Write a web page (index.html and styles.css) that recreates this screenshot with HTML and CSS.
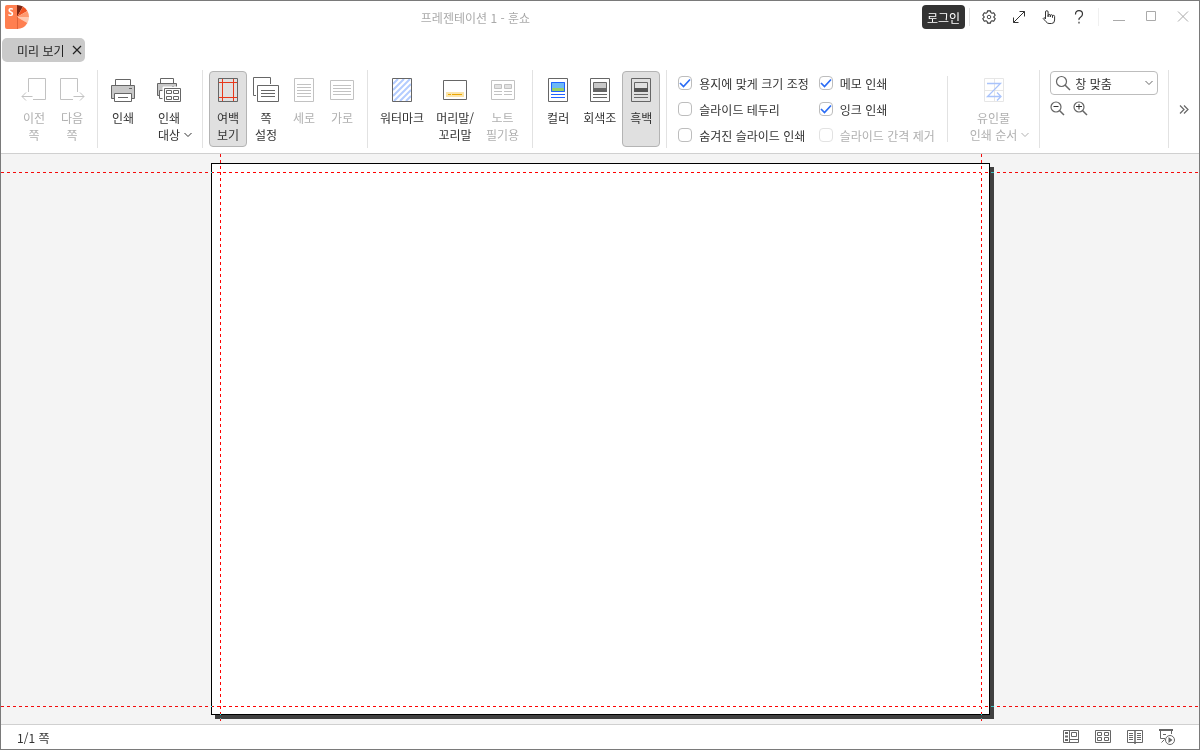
FILE: index.html
```html
<!DOCTYPE html>
<html lang="ko">

<head>
    <meta charset="UTF-8">
    <meta name="viewport" content="width=device-width, initial-scale=1.0">
    <title>프레젠테이션 1 - 훈쇼</title>
    <link rel="stylesheet" href="styles.css">
</head>

<body>
    <header class="titlebar">
        <svg class="logo" width="24" height="24" viewBox="0 0 24 24">
            <path d="M2 0h10v24H2a2 2 0 0 1-2-2V2a2 2 0 0 1 2-2z" fill="#ff7f50" />
            <path d="M12 12V0a12 12 0 0 1 6 1.600z" fill="#7c2512" />
            <path d="M12 12L18 1.600A12 12 0 0 1 22.400 6z" fill="#f05423" />
            <path d="M12 12L22.400 6A12 12 0 0 1 24 12z" fill="#ff9a70" />
            <path d="M12 12H24A12 12 0 0 1 22.400 18z" fill="#ffc9b0" />
            <path d="M12 12L22.400 18A12 12 0 0 1 12 24z" fill="#ff7f50" />
            <path d="M12.500 12v12" stroke="#e0643a" />
            <text x="3" y="11" class="logo-letter">S</text>
        </svg>
        <h1 class="doc-title">프레젠테이션 1 - 훈쇼</h1>
        <button class="login">로그인</button>
        <span class="bar-sep"></span>
        <button class="bar-btn" aria-label="설정">
            <svg class="ico" width="14" height="14" viewBox="0 0 16 16">
                <path stroke-width="1.200" stroke-linejoin="round" d="M6.300 1h3.400l.5 2 1.200.7 2-.6 1.700 2.900-1.500 1.500v1l1.500 1.400-1.700 2.900-2-.5-1.200.7-.5 2H6.300l-.5-2-1.200-.7-2 .5L.9 9.900 2.400 8.500v-1L.9 6l1.700-2.900 2 .6L5.800 3z" />
                <circle cx="8" cy="8" r="2" />
            </svg>
        </button>
        <button class="bar-btn" aria-label="전체 화면">
            <svg class="ico" width="16" height="16" viewBox="0 0 16 16">
                <path d="M2.500 13.500l11-11M8.500 2.500h5v5M2.500 8.500v5h5" />
            </svg>
        </button>
        <button class="bar-btn" aria-label="터치 모드">
            <svg class="ico" width="16" height="16" viewBox="0 0 16 16">
                <path stroke-linejoin="round" d="M4.500 10V3a1.300 1.300 0 0 1 2.600 0v4.500M7.100 8V6.500a1 1 0 0 1 2.200 0V8M9.300 8V6.800a1 1 0 0 1 2.200 0V8.500M11.500 8.500V7.400a1 1 0 0 1 2.100 0V11q0 3.500-3 3.500H8Q6.500 14.500 5 12.700L2.200 9.500Q2.500 8 4.500 9.500" />
            </svg>
        </button>
        <button class="bar-btn" aria-label="도움말">
            <svg class="ico" width="16" height="16" viewBox="0 0 16 16">
                <path stroke-width="1.200" d="M4.500 5.500Q4.500 1.600 8 1.600t3.500 3.400Q11.500 7 9.500 8.200T8 11M8 12.800v1.700" />
            </svg>
        </button>
        <span class="bar-sep light"></span>
        <button class="win-btn" aria-label="최소화">
            <svg class="ico" width="16" height="16" viewBox="0 0 16 16"><path d="M2 11.500h12" /></svg>
        </button>
        <button class="win-btn" aria-label="최대화">
            <svg class="ico" width="16" height="16" viewBox="0 0 16 16"><path d="M3.500 2.500h9v9h-9z" /></svg>
        </button>
        <button class="win-btn" aria-label="닫기">
            <svg class="ico" width="16" height="16" viewBox="0 0 16 16"><path d="M3 2.500l10 10M13 2.500l-10 10" /></svg>
        </button>
    </header>

    <nav class="tabs">
        <div class="tab">
            <span>미리 보기</span>
            <button class="tab-close" aria-label="미리 보기 닫기">
                <svg class="ico" width="10" height="10" viewBox="0 0 10 10"><path stroke-width="1.200" d="M1 1l8 8M9 1l-8 8" /></svg>
            </button>
        </div>
    </nav>

    <div class="ribbon">
        <div class="group first">
            <button class="tool" disabled>
                <svg class="ico" width="26" height="26" viewBox="0 0 26 26">
                    <path d="M7.500 15V1.500h17v21H12M1 19.500h10.500M5 15.500l-4 4 4 4" />
                </svg>
                <span>이전<br>쪽</span>
            </button>
            <button class="tool" disabled>
                <svg class="ico" width="26" height="26" viewBox="0 0 26 26">
                    <path d="M18.500 15V1.500h-17v21H14M14.500 19.500H25M21 15.500l4 4-4 4" />
                </svg>
                <span>다음<br>쪽</span>
            </button>
        </div>

        <div class="group">
            <button class="tool">
                <svg class="ico" width="26" height="26" viewBox="0 0 26 26">
                    <path fill="#fff" d="M5.500 2.500h15v6h-15z" />
                    <path fill="#c8c8c8" d="M1.500 8.500h23v13h-23z" />
                    <path d="M19 11.500h3" />
                    <path fill="#fff" d="M4.500 16.500h17v8h-17z" />
                    <path d="M8 20.500h10" />
                </svg>
                <span>인쇄</span>
            </button>
            <button class="tool with-arrow">
                <svg class="ico" width="26" height="26" viewBox="0 0 26 26">
                    <path fill="#fff" d="M4.500 1.500h13v5h-13z" />
                    <path fill="#c8c8c8" d="M1.500 6.500h19v12h-19z" />
                    <path d="M16 9.500h2" />
                    <path fill="#fff" d="M3.500 13.500h5v8h-5z" />
                    <path fill="#fff" stroke="#fff" d="M7 10h19v16H7z" />
                    <path fill="#fff" d="M8.500 11.500h16v13h-16zM10.500 13.500h5v3h-5zM17.500 13.500h5v3h-5zM10.500 19.500h5v3h-5zM17.500 19.500h5v3h-5z" />
                </svg>
                <span>인쇄<br>대상<svg class="arrow" width="8" height="6" viewBox="0 0 8 6"><path d="M.5 1L4 4.500 7.500 1" /></svg></span>
            </button>
        </div>

        <div class="group">
            <button class="tool active" aria-pressed="true">
                <svg class="ico" width="26" height="26" viewBox="0 0 26 26">
                    <path d="M3.500 1.500h19v23h-19z" />
                    <path stroke="#e8381b" d="M7.500 2v22M18.500 2v22M4 5.500h18M4 20.500h18" />
                </svg>
                <span>여백<br>보기</span>
            </button>
            <button class="tool">
                <svg class="ico" width="26" height="26" viewBox="0 0 26 26">
                    <path d="M3 18.500H.5V.5h17V7M4.500 8.500h21v16h-21zM8 13.500h14M8 16.500h14M8 19.500h14" />
                </svg>
                <span>쪽<br>설정</span>
            </button>
            <button class="tool" disabled>
                <svg class="ico" width="26" height="26" viewBox="0 0 26 26">
                    <path d="M3.500 1.500h19v23h-19zM6 7.500h14M6 10.500h14M6 13.500h14M6 16.500h14M6 19.500h14" />
                </svg>
                <span>세로</span>
            </button>
            <button class="tool" disabled>
                <svg class="ico" width="26" height="26" viewBox="0 0 26 26">
                    <path d="M1.500 3.500h23v19h-23zM4 8.500h18M4 11.500h18M4 14.500h18M4 17.500h18" />
                </svg>
                <span>가로</span>
            </button>
        </div>

        <div class="group marks">
            <button class="tool">
                <svg class="ico" width="26" height="26" viewBox="0 0 26 26">
                    <path stroke="#b3ccff" stroke-width="2" d="M4 7l5-5M4 13L15 2M4 19L21 2M5 24L22 7M11 24l11-11M17 24l5-5" />
                    <path d="M3.500 1.500h19v23h-19z" />
                </svg>
                <span>워터마크</span>
            </button>
            <button class="tool">
                <svg class="ico" width="26" height="26" viewBox="0 0 26 26">
                    <path fill="#fff" d="M1.500 3.500h23v19h-23z" />
                    <path fill="#fbe5ab" stroke="none" d="M4 15h18v5H4z" />
                    <path stroke="#eda600" d="M6 17.500h3M10 17.500h10" />
                </svg>
                <span>머리말/<br>꼬리말</span>
            </button>
            <button class="tool" disabled>
                <svg class="ico" width="26" height="26" viewBox="0 0 26 26">
                    <path d="M1.500 3.500h23v19h-23zM4 14.500h8M14 14.500h8M4 17.500h8M14 17.500h8" />
                    <path fill="#e2e2e2" d="M4.500 7.500h7v4h-7zM14.500 7.500h7v4h-7z" />
                </svg>
                <span>노트<br>필기용</span>
            </button>
        </div>

        <div class="group">
            <button class="tool">
                <svg class="ico" width="26" height="26" viewBox="0 0 26 26">
                    <path fill="#fff" d="M3.500 1.500h19v23h-19z" />
                    <path fill="#6cb8f5" stroke="none" d="M6 5h14v6H6z" />
                    <path fill="#98cf63" stroke="none" d="M6 11h14v4H6z" />
                    <path stroke="#1f62ff" d="M6.500 5.500h13v9h-13zM6 17.500h14M6 20.500h14" />
                </svg>
                <span>컬러</span>
            </button>
            <button class="tool">
                <svg class="ico" width="26" height="26" viewBox="0 0 26 26">
                    <path fill="#fff" d="M3.500 1.500h19v23h-19z" />
                    <path fill="#c8c8c8" d="M6.500 5.500h13v9h-13z" />
                    <path fill="#666" stroke="none" d="M6 11h14v4H6z" />
                    <path d="M6 17.500h14M6 20.500h14" />
                </svg>
                <span>회색조</span>
            </button>
            <button class="tool active" aria-pressed="true">
                <svg class="ico" width="26" height="26" viewBox="0 0 26 26">
                    <path d="M3.500 1.500h19v23h-19zM6.500 5.500h13v9h-13zM6 17.500h14M6 20.500h14" />
                    <path fill="#555" stroke="none" d="M6 11h14v4H6z" />
                </svg>
                <span>흑백</span>
            </button>
        </div>

        <div class="group options">
            <label class="check"><input type="checkbox" checked>용지에 맞게 크기 조정</label>
            <label class="check"><input type="checkbox" checked>메모 인쇄</label>
            <label class="check"><input type="checkbox">슬라이드 테두리</label>
            <label class="check"><input type="checkbox" checked>잉크 인쇄</label>
            <label class="check"><input type="checkbox">숨겨진 슬라이드 인쇄</label>
            <label class="check off"><input type="checkbox" disabled>슬라이드 간격 제거</label>
        </div>

        <div class="group order">
            <button class="tool with-arrow" disabled>
                <svg class="ico" width="26" height="26" viewBox="0 0 26 26">
                    <path stroke="#e6e6e6" d="M3.500 1.500h19v23h-19zM13.500 2v22M4 13.500h18" />
                    <path stroke="#a9c3fb" stroke-width="1.300" d="M6 6.500h13.500L6.500 19.500H19M16 15.500l4 4-4 4" />
                </svg>
                <span>유인물<br>인쇄 순서<svg class="arrow" width="8" height="6" viewBox="0 0 8 6"><path d="M.5 1L4 4.500 7.500 1" /></svg></span>
            </button>
        </div>

        <div class="group zoom">
            <div class="zoom-select">
                <svg class="ico" width="16" height="16" viewBox="0 0 16 16">
                    <circle cx="6.500" cy="6.500" r="5" stroke-width="1.200" /><path stroke-width="1.500" d="M10 10l5 5" />
                </svg>
                <select aria-label="확대/축소">
                    <option>창 맞춤</option>
                </select>
                <svg class="arrow" width="8" height="6" viewBox="0 0 8 6"><path d="M.5 1L4 4.500 7.500 1" /></svg>
            </div>
            <div class="zoom-btns">
                <button aria-label="축소">
                    <svg class="ico" width="15" height="15" viewBox="0 0 15 15">
                        <circle cx="6" cy="6" r="5" stroke-width="1.200" /><path stroke-width="1.500" d="M9.500 9.500L14 14" /><path stroke="#333" d="M3.500 5.500h5" />
                    </svg>
                </button>
                <button aria-label="확대">
                    <svg class="ico" width="15" height="15" viewBox="0 0 15 15">
                        <circle cx="6" cy="6" r="5" stroke-width="1.200" /><path stroke-width="1.500" d="M9.500 9.500L14 14" /><path stroke="#333" d="M3 5.500h6M6 3v5.500" />
                    </svg>
                </button>
            </div>
        </div>

        <button class="more" aria-label="더 보기">
            <svg class="ico" width="10" height="9" viewBox="0 0 10 9"><path stroke-width="1.200" d="M1 .5l4 4-4 4M5 .5l4 4-4 4" /></svg>
        </button>
    </div>

    <main class="workspace">
        <div class="sheet">
            <i class="guide left"></i>
            <i class="guide right"></i>
        </div>
        <i class="guide top"></i>
        <i class="guide bottom"></i>
    </main>

    <footer class="status">
        <span class="page-no">1/1 쪽</span>
        <button aria-label="기본">
            <svg class="ico" width="18" height="16" viewBox="0 0 18 16">
                <path d="M1.500 1.500h15v12h-15zM7.500 2v11M9.500 3.500h5v4h-5zM8 10.500h8" />
                <path stroke-width="2" d="M3 4h3M3 7.500h3M3 11h3" />
            </svg>
        </button>
        <button aria-label="여러 슬라이드">
            <svg class="ico" width="18" height="16" viewBox="0 0 18 16">
                <path d="M1.500 1.500h15v12h-15zM3.500 3.500h4v3h-4zM10.500 3.500h4v3h-4zM3.500 8.500h4v3h-4zM10.500 8.500h4v3h-4z" />
            </svg>
        </button>
        <button aria-label="읽기용 보기">
            <svg class="ico" width="18" height="16" viewBox="0 0 18 16">
                <path d="M1.500 1.500h15v12h-15zM3 4.500h4M3 6.500h4M3 8.500h4M3 10.500h4M11 4.500h4M11 6.500h4M11 8.500h4M11 10.500h4" />
                <path stroke-width="1.500" d="M9 1.500V15" />
            </svg>
        </button>
        <button aria-label="슬라이드 쇼">
            <svg class="ico" width="18" height="16" viewBox="0 0 18 16">
                <path stroke-width="2" d="M1 1h14" />
                <path d="M2.500 2v7.500H7M13.500 2v3M5 5.500h3M3.500 13.500l3-3" />
                <circle cx="12" cy="11" r="4.500" fill="#fff" />
                <path fill="#666" stroke="none" d="M10.500 8l4 3-4 3z" />
            </svg>
        </button>
    </footer>
</body>

</html>
```
FILE: styles.css
```css
:root {
    --text: #333;
    --icon: #666;
    --off: #b0b0b0;
    --off-icon: #c2c2c2;
    --line: #d0d0d0;
    --sep: #e2e2e2;
}

* {
    box-sizing: border-box;
}

body {
    margin: 0;
    height: 100vh;
    display: flex;
    flex-direction: column;
    border: 1px solid #7a7a7a;
    background: #fff;
    color: var(--text);
    font: 12px/17px "Noto Sans CJK KR", sans-serif;
    overflow: hidden;
}

button,
select {
    margin: 0;
    padding: 0;
    border: none;
    background: none;
    color: inherit;
    font: inherit;
}

svg {
    display: block;
    flex: none;
}

.ico,
.arrow {
    fill: none;
    stroke: currentColor;
}

/* title bar */
.titlebar {
    display: flex;
    align-items: center;
    height: 32px;
    padding-left: 4px;
}

.logo-letter {
    fill: #fff;
    font: bold 10px "Noto Sans", sans-serif;
}

.doc-title {
    flex: 1;
    margin: 0;
    font-size: 12px;
    font-weight: normal;
    text-align: center;
    color: #aaa;
}

.login {
    height: 24px;
    padding: 0 5px;
    border-radius: 4px;
    background: #333;
    color: #fff;
}

.bar-sep {
    width: 1px;
    height: 18px;
    margin: 0 4px;
    background: var(--sep);
}

.bar-sep.light {
    background: #f0f0f0;
}

.bar-btn,
.win-btn {
    display: flex;
    align-items: center;
    justify-content: center;
    width: 30px;
    height: 30px;
}

.win-btn {
    width: 32px;
    color: #aaa;
}

/* tabs */
.tabs {
    display: flex;
    padding: 5px 1px 0;
}

.tab {
    display: flex;
    align-items: center;
    gap: 7px;
    height: 24px;
    padding: 0 3px 0 15px;
    border-radius: 5px;
    background: #cacaca;
    color: #222;
}

/* ribbon */
.ribbon {
    display: flex;
    padding: 8px 0 5px;
    border-bottom: 1px solid var(--line);
}

.group {
    display: flex;
    flex: none;
    height: 78px;
    padding: 1px 6px;
    border-right: 1px solid var(--sep);
}

.group.first {
    padding-left: 14px;
}

.group.marks {
    padding-right: 7px;
}

.tool {
    display: flex;
    flex-direction: column;
    align-items: center;
    gap: 6px;
    min-width: 38px;
    padding: 5px;
    border: 1px solid transparent;
    border-radius: 4px;
    white-space: nowrap;
}

.tool .ico {
    color: var(--icon);
}

.tool.active {
    border-color: #b4b4b4;
    background: #e0e0e0;
}

.tool:disabled {
    color: var(--off);
}

.tool:disabled .ico {
    color: var(--off-icon);
}

.tool.with-arrow {
    padding: 5px 13px;
}

.tool .arrow {
    display: inline-block;
    margin: 0 -12px 2px 4px;
}

.options {
    display: grid;
    grid-template-columns: auto auto;
    align-content: center;
    column-gap: 10px;
    height: 66px;
    margin: 6px 0;
    padding: 0 12px 0 11px;
}

.check {
    display: flex;
    align-items: center;
    gap: 7px;
    height: 26px;
    white-space: nowrap;
}

.check input {
    appearance: none;
    flex: none;
    width: 14px;
    height: 14px;
    margin: 0;
    border: 1px solid #bdbdbd;
    border-radius: 4px;
    background: #fff;
}

.check input:checked {
    background: url("data:image/svg+xml,%3Csvg xmlns='http://www.w3.org/2000/svg' viewBox='0 0 12 12'%3E%3Cpath d='M1 6l3.500 3.500 6.500-7' fill='none' stroke='%232a6cf5' stroke-width='1.700'/%3E%3C/svg%3E") center / 12px no-repeat;
}

.check.off {
    color: var(--off);
}

.check.off input {
    border-color: #e2e2e2;
}

.group.order {
    padding: 1px 8px;
}

.zoom {
    flex-direction: column;
    gap: 6px;
    padding: 1px 10px;
}

.zoom-select {
    display: flex;
    align-items: center;
    width: 108px;
    height: 24px;
    padding: 0 4px;
    border: 1px solid #bdbdbd;
    border-radius: 4px;
}

.zoom-select select {
    appearance: none;
    flex: 1;
    padding-left: 4px;
}

.zoom-select .ico,
.zoom-select .arrow,
.zoom-btns,
.more {
    color: var(--icon);
}

.zoom-btns {
    display: flex;
    gap: 8px;
}

.more {
    display: flex;
    align-items: center;
    margin: 0 auto;
}

/* preview area */
.workspace {
    flex: 1;
    min-height: 0;
    position: relative;
    display: flex;
    justify-content: center;
    padding: 9px 9px 9px 10px;
    background: #f4f4f4;
    overflow: hidden;
}

.sheet {
    position: relative;
    height: 100%;
    aspect-ratio: 779 / 552;
    border: 1px solid #000;
    background: #fff;
    box-shadow: 4px 4px 0 #404040;
}

/* margin guides invert whatever they cross */
.guide {
    position: absolute;
    mix-blend-mode: difference;
}

.guide.top,
.guide.bottom {
    left: 0;
    right: 0;
    height: 1px;
    background: repeating-linear-gradient(90deg, #0ff 0 3px, transparent 3px 6px);
}

.guide.left,
.guide.right {
    top: -10px;
    bottom: -7px;
    width: 1px;
    background: repeating-linear-gradient(#0ff 0 3px, transparent 3px 6px);
}

.guide.top {
    top: 18px;
}

.guide.bottom {
    bottom: 17px;
}

.guide.left {
    left: 8px;
}

.guide.right {
    right: 7px;
}

/* status bar */
.status {
    display: flex;
    align-items: center;
    gap: 14px;
    height: 25px;
    padding: 0 23px 0 16px;
    border-top: 1px solid var(--line);
}

.status button {
    color: var(--icon);
}

.page-no {
    flex: 1;
}
```
